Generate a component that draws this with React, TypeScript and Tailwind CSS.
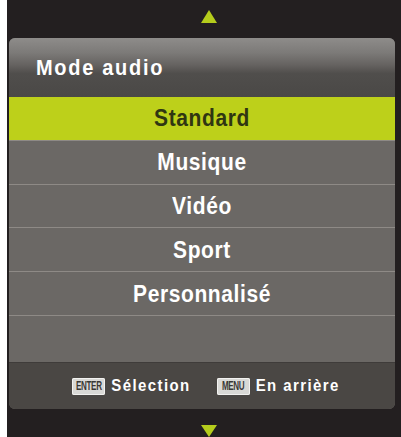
const items = ['Musique', 'Vidéo', 'Sport', 'Personnalisé'];

const UpArrow = () => (
  <svg width="16" height="13" viewBox="0 0 16 13">
    <polygon points="8,0 16,13 0,13" fill="#b5cc1c" />
  </svg>
);

const DownArrow = () => (
  <svg width="16" height="12" viewBox="0 0 16 12">
    <polygon points="0,0 16,0 8,12" fill="#b5cc1c" />
  </svg>
);

const KeyBadge = ({ label }: { label: string }) => (
  <span className="flex h-[17px] w-[33px] items-center justify-center overflow-hidden rounded-[2px] bg-[#d9d9d6] shadow-[inset_0_0_0_1px_#f2f2f0]">
    <span className="inline-block scale-x-[0.62] text-[13px] font-bold tracking-[-0.5px] text-[#3a3836]">
      {label}
    </span>
  </span>
);

export default function App() {
  return (
    <div className="h-[437px] w-[401px] bg-white [font-family:'Liberation_Sans',Arial,sans-serif]">
      <div className="ml-[7px] flex h-[437px] w-[394px] flex-col bg-[#231f20] pt-[5px]">
        <div className="flex h-[33px] justify-center pl-[10px] pt-[5px]">
          <UpArrow />
        </div>

        <div className="ml-[2px] flex w-[386px] flex-col overflow-hidden rounded-[6px] bg-[#6b6865]">
          {/* title bar */}
          <div className="flex h-[59px] items-center bg-[linear-gradient(to_bottom,#8e8c8a_0%,#7c7a78_25%,#666361_45%,#504e4c_60%,#4a4846_100%)] pl-[27px]">
            <span className="inline-block scale-y-110 text-[20px] font-bold tracking-[1.7px] text-white">
              Mode audio
            </span>
          </div>

          <div className="flex h-[43px] items-center justify-center bg-[#bdd01a]">
            <span className="inline-block scale-y-110 text-[21px] font-bold tracking-[0.6px] text-[#2f3612]">
              Standard
            </span>
          </div>

          {items.map((item) => (
            <div
              key={item}
              className="flex h-[44px] items-center justify-center border-t border-[#8e8a86] bg-[#6b6865]"
            >
              <span className="inline-block scale-y-110 text-[21px] font-bold tracking-[0.6px] text-white">
                {item}
              </span>
            </div>
          ))}

          <div className="h-[47px] border-t border-[#8e8a86] bg-[#6b6865]" />

          {/* footer */}
          <div className="flex h-[47px] items-center justify-center gap-[6px] border-t border-[#3f3c3a] bg-[#4a4744] pl-[8px] text-[15px] font-bold tracking-[1.4px] text-white">
            <KeyBadge label="ENTER" />
            <span className="mr-[20px] inline-block scale-y-110">Sélection</span>
            <KeyBadge label="MENU" />
            <span className="inline-block scale-y-110">En arrière</span>
          </div>
        </div>

        <div className="flex flex-1 justify-center pl-[10px] pt-[16px]">
          <DownArrow />
        </div>
      </div>
    </div>
  );
}
